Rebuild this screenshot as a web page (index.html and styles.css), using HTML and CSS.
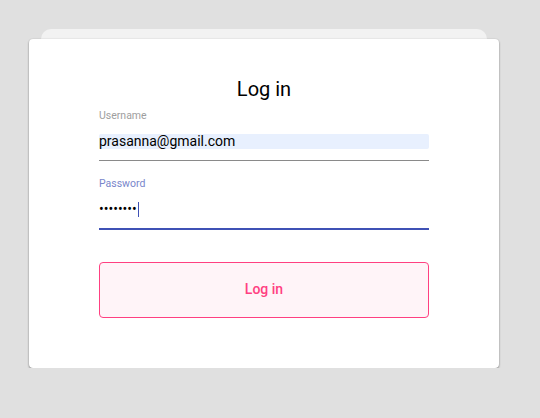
FILE: index.html
```html
<!DOCTYPE html>
<html lang="en">
<head>
<meta charset="utf-8">
<title>Log in</title>
<link rel="stylesheet" href="styles.css">
</head>
<body>
<main class="page">
  <form class="card">
    <h1 class="title">Log in</h1>
    <div class="field">
      <label class="label">Username</label>
      <div class="row"><span class="value autofill">prasanna@gmail.com</span></div>
    </div>
    <div class="field field-focused">
      <label class="label label-focused">Password</label>
      <div class="row"><span class="value dots">••••••••</span><span class="caret"></span></div>
    </div>
    <button class="btn" type="button">Log in</button>
  </form>
</main>
</body>
</html>
```
FILE: styles.css
```css
html, body {
  margin: 0;
  padding: 0;
  background: #e0e0e0;
  font-family: Roboto, "Liberation Sans", sans-serif;
}
.page {
  position: relative;
  z-index: 0;
  padding: 39px 41px 0 29px;
}
.card {
  position: relative;
  width: 470px;
  box-sizing: border-box;
  padding: 38px 70px 50px;
  background: #fff;
  border-radius: 4px;
  box-shadow: 0 1px 2px rgba(0,0,0,0.45), 0 0 2px rgba(0,0,0,0.08);
  display: flex;
  flex-direction: column;
}
.card::before {
  content: "";
  position: absolute;
  top: -10px;
  left: 12px;
  right: 12px;
  height: 24px;
  background: #f2f2f2;
  border-radius: 10px;
  z-index: -1;
}
.title {
  margin: 0 0 9px;
  font-size: 20px;
  line-height: 24px;
  font-weight: 400;
  color: #000;
  text-align: center;
}
.field {
  display: flex;
  flex-direction: column;
  padding-bottom: 11px;
  border-bottom: 1px solid #8a8a8a;
}
.field-focused {
  margin-top: 17px;
  border-bottom: 2px solid #3f51b5;
}
.label {
  font-size: 10.5px;
  line-height: 12px;
  color: #9e9e9e;
  margin-bottom: 12px;
}
.label-focused {
  color: #7986cb;
}
.row {
  display: flex;
  align-items: center;
  height: 15px;
}
.value {
  font-size: 14px;
  line-height: 15px;
  color: #000;
}
.autofill {
  flex: 1;
  background: #e8f0fe;
  border-radius: 2px;
}
.dots {
  font-size: 14px;
  letter-spacing: 0;
}
.caret {
  width: 1px;
  height: 15px;
  background: #3f51b5;
  margin-left: 1px;
}
.btn {
  margin-top: 32px;
  height: 56px;
  padding: 0 0 2px;
  border: 1px solid #ff4081;
  border-radius: 4px;
  background: #fff4f8;
  color: #ff4081;
  font-family: Roboto, "Liberation Sans", sans-serif;
  font-size: 14px;
  font-weight: 500;
  cursor: pointer;
}
```
